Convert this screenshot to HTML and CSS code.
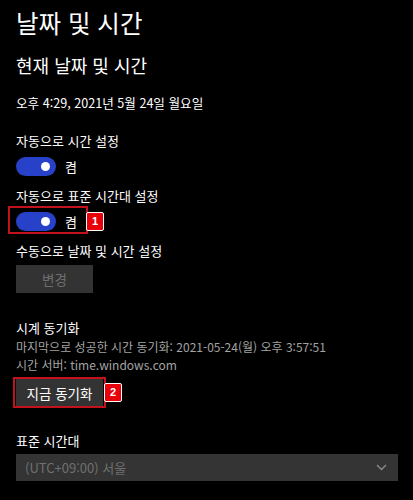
FILE: index.html
```html
<!DOCTYPE html>
<html lang="ko">
<head>
  <meta charset="UTF-8">
  <title>날짜 및 시간</title>
  <link rel="stylesheet" href="styles.css">
</head>
<body>

  <div class="page">
    <h1>날짜 및 시간</h1>
    <h2>현재 날짜 및 시간</h2>
    <p class="now">오후 4:29, 2021년 5월 24일 월요일</p>

    <!-- 자동 시간 -->
    <p class="label first">자동으로 시간 설정</p>
    <div class="toggle-row">
      <span class="toggle"><span class="knob"></span></span>
      <span class="state">켬</span>
    </div>

    <p class="label">자동으로 표준 시간대 설정</p>
    <div class="toggle-row marked">
      <span class="toggle"><span class="knob"></span></span>
      <span class="state">켬</span>
      <span class="callout"></span>
      <span class="badge">1</span>
    </div>

    <p class="label">수동으로 날짜 및 시간 설정</p>
    <button class="btn disabled">변경</button>

    <!-- 동기화 -->
    <p class="label section">시계 동기화</p>
    <div class="infos">
      <p class="info">마지막으로 성공한 시간 동기화: 2021-05-24(월) 오후 3:57:51</p>
      <p class="info">시간 서버: time.windows.com</p>
    </div>
    <div class="btn-wrap marked">
      <button class="btn">지금 동기화</button>
      <span class="callout"></span>
      <span class="badge">2</span>
    </div>

    <p class="label section">표준 시간대</p>
    <div class="select">
      <span>(UTC+09:00) 서울</span>
      <svg width="11" height="7" viewBox="0 0 11 7"><path d="M1 1l4.5 4.5L10 1" fill="none" stroke="#8a8a8a" stroke-width="1.4"/></svg>
    </div>
  </div>

</body>
</html>
```

FILE: styles.css
```css
body {
  margin: 0;
  background: #000;
  color: #fff;
  font-family: "Noto Sans CJK KR", "Noto Sans", sans-serif;
}

.page {
  padding: 6px 15px 0 16px;
}

h1 {
  margin: 0;
  font-size: 24.5px;
  line-height: 34px;
  font-weight: 400;
}

h2 {
  margin: 12px 0 0;
  font-size: 18px;
  line-height: 26px;
  font-weight: 400;
}

p {
  margin: 0;
}

.now {
  margin-top: 15px;
  font-size: 12.6px;
  line-height: 20px;
}

.label {
  margin-top: 8px;
  font-size: 13px;
  line-height: 20px;
}

.label.first {
  margin-top: 18px;
}

.label.section {
  margin-top: 25px;
}

.toggle-row {
  position: relative;
  display: flex;
  align-items: center;
  height: 24px;
  margin-top: 3px;
}

.toggle {
  position: relative;
  width: 40px;
  height: 19px;
  border-radius: 10px;
  background: #2742c8;
}

.knob {
  position: absolute;
  right: 6px;
  top: 5px;
  width: 9px;
  height: 9px;
  border-radius: 50%;
  background: #fff;
}

.state {
  margin-left: 9px;
  font-size: 13px;
}

.btn {
  display: block;
  margin-top: 4px;
  height: 28px;
  padding: 0 17px;
  border: 0;
  background: #333;
  color: #fff;
  font-family: inherit;
  font-size: 13.5px;
}

.btn.disabled {
  width: 77px;
  color: #6e6e6e;
}

.info {
  color: #a3a3a3;
  font-size: 12px;
  line-height: 17.5px;
}

.btn-wrap {
  position: relative;
  display: inline-block;
  margin-top: 6px;
}

.btn-wrap .btn {
  margin: 0;
  height: 27px;
  width: 87px;
  padding: 0;
}

.callout {
  position: absolute;
  border: 2px solid #c4121c;
  pointer-events: none;
}

.toggle-row .callout {
  left: -8px;
  top: -3px;
  width: 76px;
  height: 24px;
}

.btn-wrap .callout {
  left: -3px;
  top: -2px;
  width: 89px;
  height: 27px;
}

.badge {
  position: absolute;
  width: 16px;
  height: 17px;
  border: 1px solid #fff;
  border-radius: 2px;
  background: #e8000b;
  color: #fff;
  font-family: "Liberation Sans", sans-serif;
  font-size: 11px;
  font-weight: 700;
  line-height: 17px;
  text-align: center;
}

.toggle-row .badge {
  left: 70px;
  top: 3px;
}

.btn-wrap .badge {
  left: 88px;
  top: 4px;
}

.select {
  display: flex;
  align-items: center;
  justify-content: space-between;
  margin-top: 3px;
  height: 27px;
  padding: 0 11px 0 9px;
  background: #343434;
  color: #707070;
  font-size: 13px;
}
```
